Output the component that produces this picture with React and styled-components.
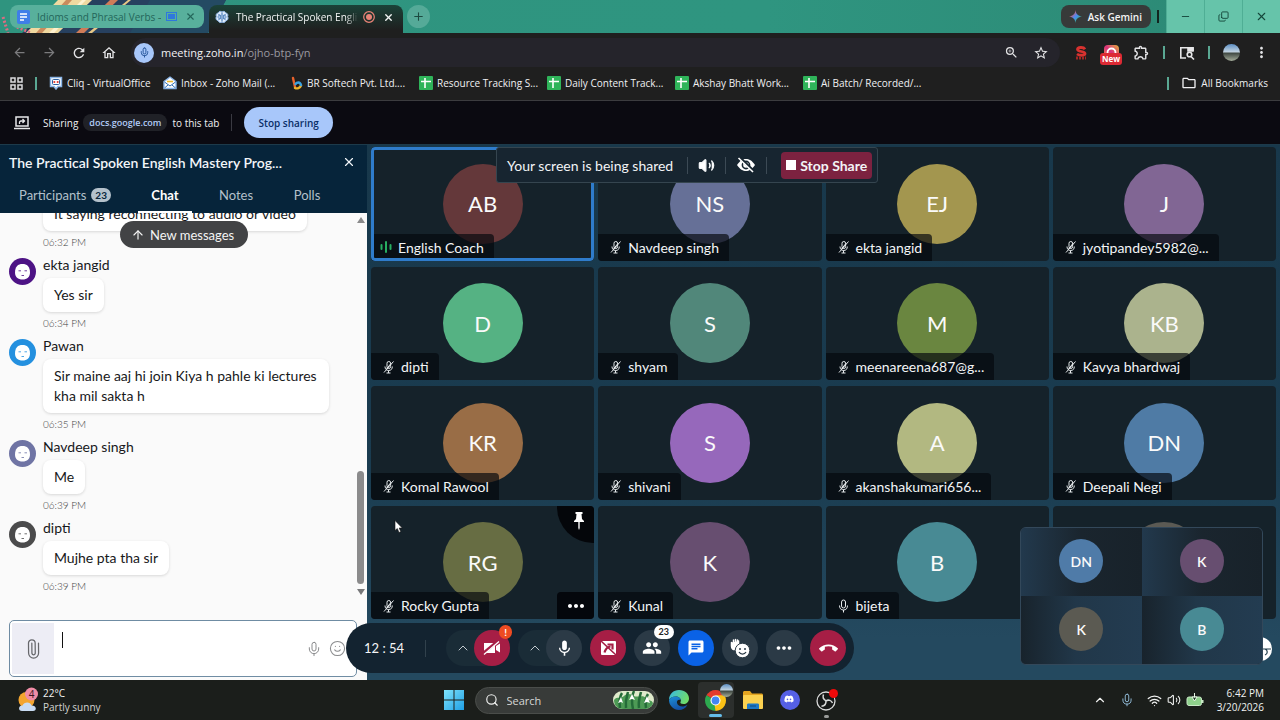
import React from "react";
import styled, { createGlobalStyle, css } from "styled-components";
import {
  MdArrowBack,
  MdArrowForward,
  MdCallEnd,
  MdChat,
  MdMic,
  MdMoreHoriz,
  MdMoreVert,
  MdOutlineExtension,
  MdOutlineFolder,
  MdOutlineHome,
  MdOutlineZoomIn,
  MdPeople,
  MdRefresh,
  MdStarBorder,
} from "react-icons/md";
import { FaDiscord } from "react-icons/fa";
import {
  ArrowUp,
  ChevronUp,
  Copy,
  Mic,
  Minus,
  Paperclip,
  Plus,
  Search,
  Smile,
  Volume2,
  Wifi,
  X,
} from "lucide-react";

const GlobalStyle = createGlobalStyle`
  *, *::before, *::after {
    box-sizing: border-box;
  }
  body {
    margin: 0;
    background: #1f1f1f;
  }
  button, input, textarea {
    font: inherit;
    color: inherit;
    border: none;
    background: none;
    padding: 0;
    margin: 0;
    outline: none;
  }
  svg {
    display: block;
    flex-shrink: 0;
  }
`;

const systemFont = `"Open Sans", "Noto Sans", sans-serif`;
const meetingFont = `Lato, "Open Sans", sans-serif`;

const Screen = styled.div`
  display: flex;
  flex-direction: column;
  height: 100vh;
  min-height: 600px;
  overflow: hidden;
  font-family: ${systemFont};
  font-size: 10px;
  color: #f0f0f2;
`;

/* ---------- browser chrome ---------- */

const TabStrip = styled.div`
  position: relative;
  display: flex;
  align-items: center;
  height: 33px;
  padding-left: 10px;
  background: linear-gradient(90deg, #2f947f 0%, #2f9580 60%, #2c8874 100%);
`;

const Wallpaper = styled.svg`
  position: absolute;
  left: 0;
  top: 0;
`;

const Tab = styled.div`
  position: relative;
  display: flex;
  align-items: center;
  gap: 5px;
  width: 194px;
  ${({ $active }) =>
    $active
      ? css`
          align-self: flex-end;
          height: 28px;
          margin-left: 5px;
          padding: 0 9px 4px 6px;
          color: #f2f5f4;
          border-radius: 8px 8px 0 0;
          background: linear-gradient(180deg, #1b4238 0%, #1f1f1f 90%);
        `
      : css`
          height: 23px;
          padding: 0 8px 0 7px;
          color: #24665a;
          border-radius: 8px;
          background: #58b09c;
        `}
`;

const TabTitle = styled.span`
  flex: 1;
  min-width: 0;
  padding-left: 2px;
  overflow: hidden;
  white-space: nowrap;
  mask-image: ${({ $fade }) => ($fade ? "linear-gradient(90deg, #000 90%, transparent)" : "none")};
`;

const PlainButton = styled.button`
  display: flex;
  align-items: center;
  justify-content: center;
  color: inherit;
`;

const TabClose = styled(PlainButton)`
  margin-left: 3px;
`;

const NewTab = styled(PlainButton)`
  width: 23px;
  height: 23px;
  margin-left: 4px;
  border-radius: 50%;
  background: #55aa98;
  color: #1c4a40;
`;

const GeminiButton = styled.button`
  display: flex;
  align-items: center;
  gap: 6px;
  height: 23px;
  padding: 0 9px 0 8px;
  margin-left: auto;
  border-radius: 8px;
  background: #373a39;
  color: #f4f4f4;
  font-weight: 600;
`;

const StripMark = styled.span`
  width: 2px;
  height: 13px;
  margin: 0 7px 0 6px;
  background: #12251f;
`;

const WindowButton = styled(PlainButton)`
  width: 38px;
  height: 33px;
  border-left: 1px solid #4fae95;
  background: #66c4aa;
  color: #15463a;
`;

const Toolbar = styled.div`
  display: flex;
  align-items: center;
  height: 39px;
  padding: 0 4px;
  background: #1f1f1f;
`;

const ToolButton = styled(PlainButton)`
  position: relative;
  width: 30px;
  height: 28px;
  color: ${({ $dim }) => ($dim ? "#7b7b7d" : "#e3e3e5")};
`;

const Omnibox = styled.div`
  display: flex;
  align-items: center;
  flex: 1;
  height: 29px;
  margin: 0 6px 0 7px;
  padding: 0 4px 0 3px;
  border-radius: 15px;
  background: #25242b;
`;

const MicChip = styled.span`
  display: flex;
  align-items: center;
  justify-content: center;
  width: 20px;
  height: 20px;
  margin-right: 7px;
  border-radius: 50%;
  background: #a8c7fa;
  color: #1b4b93;
`;

const Address = styled.span`
  flex: 1;
  font-size: 11px;
  color: #f1f1f3;

  span {
    color: #9a9aa0;
  }
`;

const Divider = styled.span`
  width: ${({ $thin }) => ($thin ? "1px" : "2px")};
  height: ${({ $tall }) => ($tall ? "17px" : "13px")};
  margin: 0 ${({ $gap = 7 }) => $gap}px;
  background: ${({ $color }) => $color || "#5aa893"};
`;

const NewBadge = styled.span`
  position: absolute;
  left: 4px;
  top: 14px;
  padding: 0 2px;
  border-radius: 3px;
  background: #dc2a34;
  color: #fff;
  font-size: 8px;
  line-height: 12px;
  font-weight: 700;
`;

const ProfilePhoto = styled.span`
  width: ${({ $size }) => $size}px;
  height: ${({ $size }) => $size}px;
  border-radius: 50%;
  background: linear-gradient(180deg, #5d8fc4 0%, #c6d6e2 48%, #3d4640 52%, #a5ad9b 100%);
`;

const BookmarkBar = styled.nav`
  display: flex;
  align-items: center;
  height: 29px;
  padding: 0 12px 6px 10px;
  border-bottom: 1px solid #3c3c3f;
  background: #1f1f1f;
`;

const BookmarkList = styled.div`
  display: flex;
  flex: 1;
`;

const Bookmark = styled.a`
  display: flex;
  align-items: center;
  gap: 4px;
  width: ${({ $width }) => ($width ? `${$width}px` : "auto")};
  color: #f0f0f2;
  text-decoration: none;
  white-space: nowrap;
`;

const ShareInfoBar = styled.div`
  display: flex;
  align-items: center;
  height: 44px;
  padding-left: 14px;
  border-bottom: 1px solid #1d3a4a;
  background: #0b0a11;
`;

const SharingLabel = styled.span`
  margin-left: 13px;
`;

const DomainPill = styled.span`
  margin: 0 5px;
  padding: 0 6px;
  border-radius: 8px;
  background: #202127;
  color: #b3cdf8;
  font-size: 9px;
  font-weight: 600;
  line-height: 17px;
`;

const StopSharing = styled.button`
  height: 31px;
  padding: 0 14px;
  border-radius: 16px;
  background: #a8c7fa;
  color: #0b2f68;
  font-weight: 600;
`;

/* ---------- meeting side panel ---------- */

const Meeting = styled.main`
  display: flex;
  flex: 1;
  min-height: 0;
  font-family: ${meetingFont};
  font-size: 14px;
`;

const Panel = styled.aside`
  display: flex;
  flex-direction: column;
  flex: 0 0 367px;
  min-height: 0;
  background: #fafafa;
`;

const PanelHeader = styled.header`
  height: 68px;
  background: #06243a;
  color: #f2f6f9;
`;

const PanelTitle = styled.h1`
  display: flex;
  align-items: center;
  justify-content: space-between;
  height: 34px;
  margin: 0;
  padding: 0 11px 0 9px;
  font-size: 14px;
  font-weight: 600;
`;

const PanelTabs = styled.div`
  display: flex;
  height: 34px;
  padding-left: 7px;
`;

const PanelTab = styled.button`
  display: flex;
  align-items: center;
  justify-content: center;
  gap: 5px;
  width: ${({ $width }) => $width}px;
  border-bottom: 2px solid transparent;
  color: #b3c0ca;
  font-size: 13px;

  ${({ $active }) =>
    $active &&
    css`
      border-image: linear-gradient(90deg, transparent 16px, #fff 16px, #fff 68px, transparent 68px) 1;
      color: #fff;
      font-weight: 700;
    `}
`;

const CountPill = styled.span`
  padding: 0 4px;
  border-radius: 7px;
  background: #b4c1cb;
  color: #0a263b;
  font-size: 10px;
  font-weight: 700;
  line-height: 14px;
`;

const ChatArea = styled.div`
  position: relative;
  display: flex;
  flex: 1;
  min-height: 0;
`;

const MessageList = styled.div`
  display: flex;
  flex-direction: column;
  justify-content: flex-end;
  flex: 1;
  min-height: 0;
  gap: 6px;
  padding: 0 0 27px 9px;
  overflow: hidden;
`;

const Message = styled.article`
  display: flex;
  align-items: flex-start;
  flex-shrink: 0;
  gap: 6px;
  padding-left: ${({ $continued }) => ($continued ? 33 : 0)}px;
  color: #17181a;
`;

const FaceIcon = styled.svg`
  margin-top: 3px;
`;

const MessageBody = styled.div`
  display: flex;
  flex-direction: column;
  align-items: flex-start;
  padding-left: 1px;
`;

const Sender = styled.span`
  margin-bottom: 3px;
  line-height: 20px;
`;

const Bubble = styled.p`
  max-width: 286px;
  margin: 0;
  padding: 7px 11px;
  border-radius: 8px;
  background: #fff;
  box-shadow: 0 1px 3px rgba(0, 0, 0, 0.14);
  line-height: 20px;
`;

const Time = styled.time`
  margin-top: 4px;
  font-size: 10px;
  font-weight: 300;
  line-height: 14px;
  color: #3d3e40;
`;

const NewMessages = styled.button`
  position: absolute;
  left: 120px;
  top: 8px;
  display: flex;
  align-items: center;
  gap: 5px;
  height: 27px;
  padding: 0 14px 0 11px;
  border-radius: 14px;
  background: #424345;
  color: #f4f4f4;
  font-size: 13px;
`;

const ScrollBar = styled.div`
  display: flex;
  flex-direction: column;
  align-items: center;
  width: 13px;
  padding: 4px 0 25px;
`;

const ScrollThumb = styled.span`
  width: 7px;
  height: 113px;
  margin: auto 0 5px;
  border-radius: 4px;
  background: #8b8b8c;
`;

const Composer = styled.form`
  display: flex;
  align-items: center;
  height: 57px;
  margin: 0 10px 3px 9px;
  padding: 2px 10px 2px 2px;
  border: 1px solid #6f8ca3;
  border-radius: 5px;
  background: #fff;
  color: #8a8b8d;
`;

const AttachButton = styled(PlainButton)`
  width: 42px;
  height: 51px;
  background: #ededf5;
  color: #66676b;
`;

const Caret = styled.span`
  align-self: flex-start;
  width: 1px;
  height: 16px;
  margin: 9px 0 0 8px;
  background: #111;
`;

const MessageInput = styled.textarea`
  flex: 1;
  min-width: 0;
  height: 36px;
  resize: none;
  color: #111;
`;

const ComposerTools = styled.span`
  display: flex;
  align-items: center;
  gap: 7px;
`;

/* ---------- participants stage ---------- */

const Stage = styled.section`
  position: relative;
  flex: 1;
  min-width: 0;
  display: flex;
  flex-direction: column;
  padding: 2px 4px 61px;
  background: linear-gradient(180deg, #18384b 0%, #1a3c50 60%, #24495f 92%);
`;

const TileGrid = styled.div`
  flex: 1;
  min-height: 0;
  display: grid;
  grid-template-columns: repeat(4, 1fr);
  grid-auto-rows: 1fr;
  gap: 6px 4px;
`;

const Tile = styled.div`
  position: relative;
  display: flex;
  align-items: center;
  justify-content: center;
  min-height: 0;
  border-radius: 4px;
  overflow: hidden;
  background: #15222a;

  &::after {
    content: "";
    position: absolute;
    inset: 0;
    border-radius: 4px;
    border: ${({ $speaking }) => ($speaking ? "3px solid #2f7ccb" : "none")};
  }
`;

const Avatar = styled.span`
  display: flex;
  align-items: center;
  justify-content: center;
  flex-shrink: 0;
  width: ${({ $small }) => ($small ? 44 : 80)}px;
  height: ${({ $small }) => ($small ? 44 : 80)}px;
  border-radius: 50%;
  background: ${({ $color }) => $color};
  color: #fafafa;
  font-size: ${({ $small }) => ($small ? 14 : 22)}px;
`;

const NameLabel = styled.span`
  position: absolute;
  left: 0;
  bottom: 0;
  display: flex;
  align-items: center;
  gap: 6px;
  height: 27px;
  padding: 0 10px 0 ${({ $speaking }) => ($speaking ? 9 : 11)}px;
  border-radius: 0 4px 0 0;
  background: rgba(4, 7, 14, 0.68);
  color: #f3f5f6;
  white-space: nowrap;
`;

const PinButton = styled(PlainButton)`
  position: absolute;
  right: 0;
  top: 0;
  width: 37px;
  height: 37px;
  padding: 0 0 6px 6px;
  border-radius: 0 0 0 36px;
  background: #04060a;
  color: #fff;
`;

const TileMenu = styled(PlainButton)`
  position: absolute;
  right: 0;
  bottom: 0;
  width: 37px;
  height: 27px;
  border-radius: 4px 0 0 0;
  background: #04070c;
  color: #fff;
`;

const Pointer = styled.svg`
  position: absolute;
  left: 23px;
  top: 14px;
`;

const ShareBanner = styled.div`
  position: absolute;
  left: 129px;
  top: 2px;
  display: flex;
  align-items: center;
  height: 36px;
  padding: 0 5px 0 10px;
  border: 1px solid #35454f;
  border-radius: 3px;
  background: #172530;
  color: #f2f4f6;
`;

const BannerText = styled.span`
  margin-right: 4px;
`;

const StopShare = styled.button`
  display: flex;
  align-items: center;
  gap: 4px;
  height: 27px;
  padding: 0 5px;
  margin-left: 4px;
  border-radius: 4px;
  background: #7c2240;
  font-weight: 700;
`;

const CallControls = styled.div`
  position: absolute;
  left: -21px;
  bottom: 7px;
  display: flex;
  align-items: center;
  gap: 8px;
  height: 50px;
  padding: 0 8px 0 18px;
  border-radius: 25px;
  background: #132330;
  color: #f5f6f7;
`;

const Elapsed = styled.span`
  width: 53px;
  font-size: 13px;
  white-space: pre;
`;

const ControlDivider = styled.span`
  width: 1px;
  height: 17px;
  margin-right: 12px;
  background: #31414c;
`;

const SplitControl = styled.div`
  display: flex;
  align-items: center;
  justify-content: space-between;
  width: 64px;
  padding-left: 9px;
  border-radius: 18px;
  background: #1a2c37;
  color: #c3cbd0;
`;

const RoundButton = styled(PlainButton)`
  position: relative;
  width: 36px;
  height: 36px;
  border-radius: 50%;
  background: ${({ $color }) => $color || "#2b3a46"};
  color: #fff;
`;

const RoundBadge = styled.span`
  position: absolute;
  right: ${({ $alert }) => ($alert ? -2 : -4)}px;
  top: -5px;
  padding: 0 5px;
  border-radius: 7px;
  background: ${({ $alert }) => ($alert ? "#ee4b22" : "#fff")};
  color: ${({ $alert }) => ($alert ? "#fff" : "#222")};
  font-size: ${({ $alert }) => ($alert ? 10 : 9)}px;
  font-weight: 700;
  line-height: 14px;
`;

const HelpButton = styled(PlainButton)`
  position: absolute;
  right: 8px;
  bottom: 19px;
  width: 24px;
  height: 24px;
  border-radius: 50%;
  background: #fff;
`;

const PictureInPicture = styled.div`
  position: absolute;
  right: 17px;
  bottom: 15px;
  display: grid;
  grid-template-columns: 1fr 1fr;
  grid-template-rows: 1fr 1fr;
  width: 243px;
  height: 138px;
  border: 1px solid #33485a;
  border-radius: 6px;
  overflow: hidden;
  background: #1b2a37;
  font-weight: 600;
`;

const PipTile = styled.div`
  display: flex;
  align-items: center;
  justify-content: center;
  padding-bottom: 2px;
  background: ${({ $reverse }) =>
    $reverse
      ? "linear-gradient(90deg, #18232c 0%, #213749 45%, #233c51 100%)"
      : "linear-gradient(90deg, #22394d 0%, #1a252e 50%, #18222a 100%)"};
`;

/* ---------- taskbar ---------- */

const Taskbar = styled.footer`
  display: grid;
  grid-template-columns: 1fr auto 1fr;
  align-items: center;
  height: 40px;
  background: #1b1e1b;
  color: #f1f2f1;
`;

const Weather = styled.div`
  display: flex;
  align-items: center;
  gap: 5px;
  padding-left: 17px;
  line-height: 14px;

  small {
    display: block;
    font-size: 10px;
    color: #d2d4d2;
  }
`;

const Dock = styled.div`
  display: flex;
  align-items: center;
  gap: 1px;
`;

const DockItem = styled(PlainButton)`
  position: relative;
  width: 36px;
  height: 36px;
  border-radius: 4px;
  background: ${({ $active }) => ($active ? "#2c2f2d" : "transparent")};

  &::after {
    content: "";
    position: absolute;
    bottom: ${({ $active }) => ($active ? 1 : 0)}px;
    width: ${({ $active, $running }) => ($active ? 13 : $running ? 5 : 0)}px;
    height: 3px;
    border-radius: 2px;
    background: ${({ $active }) => ($active ? "#66bdea" : "#9a9c9a")};
  }
`;

const CornerPhoto = styled.span`
  position: absolute;
  right: 1px;
  top: 2px;
  display: flex;
`;

const SearchBox = styled.label`
  display: flex;
  align-items: center;
  gap: 8px;
  width: 183px;
  height: 27px;
  margin: 0 2px;
  padding: 0 3px 0 9px;
  border: 1px solid #4a4d4a;
  border-radius: 14px;
  background: #383b39;

  input {
    flex: 1;
    min-width: 0;
    font-size: 11px;
  }

  input::placeholder {
    color: #d5d7d5;
    opacity: 1;
  }
`;

const Tray = styled.div`
  display: flex;
  align-items: center;
  justify-content: flex-end;
  gap: 13px;
  padding-right: 16px;
`;

const TrayGroup = styled.span`
  display: flex;
  align-items: center;
  gap: 5px;
`;

const Clock = styled.div`
  text-align: right;
  line-height: 14px;
`;

/* ---------- drawings ---------- */

const WallpaperArt = () => (
  <Wallpaper width="240" height="33" viewBox="0 0 240 33" aria-hidden="true">
    <path d="M60 0H226L208 33H22Z" fill="#27405f" />
    <path d="M58 0H92L58 33H26Z" fill="#f0d9a0" />
    <path d="M66 0H72L42 33H36Z" fill="#c98b5d" />
    <path d="M82 0H86L54 33H49Z" fill="#fff2cf" />
    <path d="M110 0H118L84 33H76Z" fill="#d07c58" />
    <path d="M128 0H131L92 33H88Z" fill="#e7c786" />
    <path d="M150 0H226L208 33H130Z" fill="#244a63" />
    <path d="M3 17L8 33M17 27L31 33" stroke="#dc6c82" strokeWidth="3" strokeDasharray="2 2" />
  </Wallpaper>
);

const DocsIcon = () => (
  <svg width="13" height="14" viewBox="0 0 13 14">
    <rect width="13" height="14" rx="2" fill="#3f7ee8" />
    <path d="M3 4H10M3 7H10M3 10H7" stroke="#fff" strokeWidth="1.5" />
  </svg>
);

const MeetingTabIcon = () => (
  <svg width="14" height="14" viewBox="0 0 14 14" fill="none">
    <path
      d="M7 2C5.500.8 3.800 1.300 3.400 2.900 1.500 3 .6 4.800 1.400 6.400.3 8.300 1.200 10.400 3.200 10.800 3.800 12.700 5.800 13 7 12 8.200 13 10.200 12.700 10.800 10.800 12.800 10.400 13.700 8.300 12.600 6.400 13.400 4.800 12.500 3 10.600 2.900 10.200 1.300 8.500.8 7 2Z"
      fill="#dfecfb"
      stroke="#8db3e2"
    />
    <path d="M7 2.500V11.500" stroke="#2c69ad" />
    <path d="M3 5H5.200V9H3.200M11 5H8.800V9H10.800" stroke="#2c69ad" />
    <path d="M2.500 7H4M10 7H11.500" stroke="#2c69ad" />
  </svg>
);

const SharedTabIcon = () => (
  <svg width="11" height="9" viewBox="0 0 11 9">
    <rect x=".5" y=".5" width="10" height="8" fill="none" stroke="#2f78dd" />
    <rect x="2" y="2" width="7" height="5" fill="#2f78dd" />
  </svg>
);

const RecordingIcon = () => (
  <svg width="12" height="12" viewBox="0 0 12 12">
    <circle cx="6" cy="6" r="5.300" fill="none" stroke="#e98377" strokeWidth="1.200" />
    <circle cx="6" cy="6" r="3" fill="#e98377" />
  </svg>
);

const GeminiIcon = () => (
  <svg width="13" height="13" viewBox="0 0 13 13">
    <defs>
      <linearGradient id="gem" x1="0" y1="0" x2="1" y2="1">
        <stop offset="0.2" stopColor="#ef5350" />
        <stop offset="0.500" stopColor="#4a8cf6" />
        <stop offset="0.800" stopColor="#36b37a" />
      </linearGradient>
    </defs>
    <path d="M6.500 0C7 4 9 6 13 6.500 9 7 7 9 6.500 13 6 9 4 7 0 6.500 4 6 6 4 6.500 0Z" fill="url(#gem)" />
  </svg>
);

const TabSearchIcon = () => (
  <svg width="16" height="14" viewBox="0 0 16 14" fill="none" stroke="#e6e6e8" strokeWidth="1.600">
    <path d="M7 12H1.800V1.800H14V5" />
    <path d="M9 2H14V5H9Z" fill="#e6e6e8" />
    <circle cx="10.500" cy="8.500" r="2.300" />
    <path d="M12 10.500L15 13.500" />
  </svg>
);

const InstaIcon = () => (
  <svg width="15" height="15" viewBox="0 0 15 15">
    <defs>
      <linearGradient id="insta" x1="0" y1="1" x2="1" y2="0">
        <stop offset="0" stopColor="#f2a33a" />
        <stop offset="0.500" stopColor="#d92f7d" />
        <stop offset="1" stopColor="#e5b53a" />
      </linearGradient>
    </defs>
    <rect width="15" height="15" rx="4" fill="url(#insta)" />
    <circle cx="7.500" cy="7.500" r="4" fill="none" stroke="#fff" strokeWidth="1.800" />
  </svg>
);

const ScriptIcon = () => (
  <svg width="14" height="14" viewBox="0 0 14 14" fill="none">
    <path d="M11 3.200C9.500.800 3.500 1 3.500 3.500S11 5 11 7.500 5 9.500 3 8" stroke="#d8322f" strokeWidth="2.800" />
    <path d="M2 12H12" stroke="#a32725" strokeWidth="3" strokeDasharray="2 1" />
  </svg>
);

const AppsIcon = () => (
  <svg width="13" height="13" viewBox="0 0 13 13" fill="none" stroke="#dcdcde" strokeWidth="1.500">
    <rect x="1" y="1" width="4" height="4" />
    <rect x="8" y="1" width="4" height="4" />
    <rect x="1" y="8" width="4" height="4" />
    <rect x="8" y="8" width="4" height="4" />
  </svg>
);

const CliqIcon = () => (
  <svg width="14" height="14" viewBox="0 0 14 14">
    <path d="M1.500 1.500H12.500V10.500H9L7 13 5 10.500H1.500Z" fill="#fff" stroke="#8bb6e8" strokeWidth="1.500" />
    <rect x="3.500" y="3.500" width="7" height="5" rx="1" fill="none" stroke="#2b5f9e" />
    <path d="M4.500 6H6.200M7.800 6H9.500" stroke="#e2423d" strokeWidth="2" />
  </svg>
);

const MailIcon = () => (
  <svg width="14" height="14" viewBox="0 0 14 14" fill="none">
    <path d="M1 5.500L7 1 13 5.500V12.500H1Z" fill="#fff" stroke="#8bb6e8" strokeWidth="1.400" />
    <path d="M1.500 6L7 10 12.500 6M1.500 12L5 9M12.500 12L9 9" stroke="#2f6fb5" />
    <path d="M4 5.500H10" stroke="#e9b82f" strokeWidth="1.600" />
  </svg>
);

const SoftechIcon = () => (
  <svg width="12" height="14" viewBox="0 0 12 14" fill="none" strokeWidth="2.400" strokeLinecap="round">
    <path d="M2 2L4 11" stroke="#e8622c" />
    <path d="M4 12C6 13 9 12 10 9.500" stroke="#f0b429" />
    <path d="M4.500 8C6 6 9 5.500 10 9" stroke="#3ba2e0" />
  </svg>
);

const SheetIcon = () => (
  <svg width="14" height="14" viewBox="0 0 14 14">
    <rect width="14" height="14" rx="1" fill="#2fb45a" />
    <path d="M2 5.500H12M6 2V12" stroke="#fff" strokeWidth="1.600" />
  </svg>
);

const CastIcon = () => (
  <svg width="16" height="14" viewBox="0 0 16 14" fill="none" stroke="#e8e8ea" strokeWidth="1.500">
    <rect x="2" y="1" width="12" height="9" />
    <path d="M0 12.500H16" />
    <path d="M5.500 8V6.500C5.500 5.500 6 5 7 5H10M8.500 3L10.500 5 8.500 7" strokeWidth="1.300" />
  </svg>
);

const Face = ({ color }) => (
  <FaceIcon width="27" height="27" viewBox="0 0 27 27" aria-hidden="true">
    <circle cx="13.500" cy="13.500" r="13.500" fill={color} />
    <path d="M13.500 6C18 6 21 8.500 21 14.500 21 19 18 21.500 13.500 21.500S6 19 6 14.500C6 8.500 9 6 13.500 6Z" fill="#fff" />
    <path d="M9.500 12.800H12M15.500 12.800H18M12.500 17.500H15" stroke={color} strokeWidth="0.800" />
  </FaceIcon>
);

const MicOffIcon = () => (
  <svg width="13" height="14" viewBox="0 0 13 14" fill="none" stroke="#e6eaec" strokeWidth="1">
    <rect x="5" y="1.500" width="3.600" height="7" rx="1.800" />
    <path d="M3 6.500C3 9 4.300 10.500 6.700 10.500S10.300 9 10.300 6.500M6.500 10.500V13M4.500 13H8.500" />
    <path d="M11.500 1.500L2 12.500M9.300 3L4.500 9" />
  </svg>
);

const MicOnIcon = () => (
  <svg width="13" height="14" viewBox="0 0 13 14" fill="none" stroke="#e6eaec" strokeWidth="1">
    <rect x="4.500" y="1" width="4" height="8" rx="2" />
    <path d="M2.500 6.500C2.500 9.500 4 11 6.500 11S10.500 9.500 10.500 6.500M6.500 11V13.500" />
  </svg>
);

const SpeakingIcon = () => (
  <svg width="12" height="12" viewBox="0 0 12 12" stroke="#27ae60" strokeWidth="2" strokeLinecap="round">
    <path d="M1.500 4V8M6 1V11M10.500 4V8" />
  </svg>
);

const HiddenEyeIcon = () => (
  <svg width="20" height="16" viewBox="0 0 20 16">
    <path d="M1 8C4 3.500 7 2 10 2S16 3.500 19 8C16 12.500 13 14 10 14S4 12.500 1 8Z" fill="#fff" />
    <circle cx="10" cy="8" r="3.600" fill="none" stroke="#172530" strokeWidth="1.600" />
    <path d="M4 1L18 14.500" stroke="#172530" strokeWidth="3" />
    <path d="M2.500 1L17 15" stroke="#fff" strokeWidth="1.600" />
  </svg>
);

const PinIcon = () => (
  <svg width="10" height="18" viewBox="0 0 10 18" fill="#fff">
    <path d="M1.500 0H8.500V2H7.500L8 7 10 9V10H0V9L2 7 2.500 2H1.500Z" />
    <path d="M4.300 10H5.700V16L5 18 4.300 16Z" />
  </svg>
);

const CameraOffIcon = () => (
  <svg width="18" height="16" viewBox="0 0 18 16">
    <path d="M1 3H12V13H1ZM13 6L17 3.500V12.500L13 10Z" fill="#fff" />
    <path d="M0 13.500L15 1" stroke="#a61e45" strokeWidth="3" />
    <path d="M1 14.500L16 1.500" stroke="#fff" strokeWidth="1.300" />
  </svg>
);

const StopPresentIcon = () => (
  <svg width="17" height="16" viewBox="0 0 17 16">
    <rect x="1" y="1" width="15" height="14" rx="1" fill="#fff" />
    <path d="M4.500 12.500C5.500 9 7 7 10.500 6.500M7.500 4.500H12.500V9.500" fill="none" stroke="#a61e45" strokeWidth="2.200" />
    <path d="M1 1L16 15" stroke="#a61e45" strokeWidth="1.600" />
  </svg>
);

const ReactionIcon = () => (
  <svg width="20" height="20" viewBox="0 0 20 20">
    <path d="M1.500 4.500V8C1.500 10.500 3 12 5.500 11.500L8.500 8V3M3.500 6V2M5.500 6V1.500M7.500 6V2" fill="#fff" stroke="#fff" strokeWidth="1.500" strokeLinecap="round" />
    <circle cx="12.500" cy="12.500" r="7.300" fill="#fff" stroke="#2b3a46" strokeWidth="1" />
    <circle cx="10" cy="11" r="1" fill="#2b3a46" />
    <circle cx="15" cy="11" r="1" fill="#2b3a46" />
    <path d="M9 14C10.500 16.800 14.500 16.800 16 14" fill="none" stroke="#2b3a46" strokeWidth="1.300" />
  </svg>
);

const HelpIcon = () => (
  <svg width="24" height="24" viewBox="0 0 24 24" fill="none" stroke="#24404f" strokeWidth="1.200">
    <path d="M12 12H23M17 12C20 13 20 17 17 18" />
  </svg>
);

const WeatherIcon = () => (
  <svg width="21" height="26" viewBox="0 0 21 26">
    <circle cx="9.500" cy="13" r="8" fill="#f3a52f" />
    <path d="M5 24C1 24 1 18.500 5.500 18.500 7 14.500 13.500 14.500 14.500 18.500 20 18.500 20 24 16 24Z" fill="#c9dcf3" />
    <circle cx="14.500" cy="7" r="6.500" fill="#f08ca6" />
    <text x="14.500" y="10.500" textAnchor="middle" fontFamily="Open Sans" fontSize="10" fill="#3a1620">4</text>
  </svg>
);

const StartIcon = () => (
  <svg width="20" height="20" viewBox="0 0 20 20">
    <defs>
      <linearGradient id="win" x1="0" y1="0" x2="1" y2="1">
        <stop offset="0" stopColor="#7fe3fb" />
        <stop offset="1" stopColor="#1f9fe6" />
      </linearGradient>
    </defs>
    <path d="M0 0H9.500V9.500H0ZM10.500 0H20V9.500H10.500ZM0 10.500H9.500V20H0ZM10.500 10.500H20V20H10.500Z" fill="url(#win)" />
  </svg>
);

const SnowdropArt = () => (
  <svg width="41" height="20" viewBox="0 0 41 20">
    <rect y="1" width="41" height="18" rx="9" fill="#dfeacb" />
    <path d="M1 10C4 6 8 9 11 6S18 4 21 6 30 4 33 8 38 9 40 13C39 17 35 19 31 19H10C5 19 1 16 1 10Z" fill="#4d9a55" />
    <path d="M7 18C6 11 7 6 9 3M13 18C12 10 14 6 15 2M20 19C18 10 19 5 21 1M26 18C25 11 27 6 28 2M33 18C32 11 33 7 35 4" stroke="#246b38" strokeWidth="2.500" fill="none" />
    <path d="M8 7L5 13 8 12 10 13ZM19 4L16 10 19 9 22 10ZM34 6L31 13 34 12 37 13Z" fill="#fff" />
  </svg>
);

const EdgeIcon = () => (
  <svg width="22" height="22" viewBox="0 0 22 22">
    <defs>
      <linearGradient id="edgeTop" x1="0" y1="0" x2="1" y2="0.400">
        <stop offset="0" stopColor="#35b8e8" />
        <stop offset="1" stopColor="#6fdc6c" />
      </linearGradient>
      <linearGradient id="edgeBase" x1="0" y1="0" x2="0.500" y2="1">
        <stop offset="0" stopColor="#1d8fd8" />
        <stop offset="1" stopColor="#144fa5" />
      </linearGradient>
    </defs>
    <path d="M1 11C1 5 5.500 1 11 1 17 1 21 5 21 9.500 21 13 18.500 15 15.500 15 13 15 12 14 12.500 13 14 10 11 7.500 8 7.500 4.500 7.500 2 9 1 11Z" fill="url(#edgeTop)" />
    <path d="M1 11C2 8.500 5 7.500 8 7.500 10.500 7.500 12.500 9 12.700 11 10 10 8.500 12 9 14 9.800 17.500 15 19 19.500 15.800 17.500 19.500 14.500 21 11 21 5.500 21 1 16.500 1 11Z" fill="url(#edgeBase)" />
  </svg>
);

const ChromeIcon = () => (
  <svg width="21" height="21" viewBox="0 0 20 20">
    <path d="M10 10L1.340 5A10 10 0 0 1 18.660 5Z" fill="#e33b2e" />
    <path d="M10 10L18.660 5A10 10 0 0 1 10 20Z" fill="#fbc116" />
    <path d="M10 10L10 20A10 10 0 0 1 1.340 5Z" fill="#2da94f" />
    <path d="M10 5H18.660L14.300 12.500L10 20L9 13Z" fill="#fbc116" />
    <circle cx="10" cy="10" r="4.800" fill="#fff" />
    <circle cx="10" cy="10" r="3.700" fill="#4285f4" />
  </svg>
);

const FolderIcon = () => (
  <svg width="20" height="18" viewBox="0 0 20 18">
    <path d="M0 1.500C0 .7.7 0 1.500 0H7L9 2.500H18.500C19.300 2.500 20 3 20 4V8H0Z" fill="#e3a420" />
    <rect y="4" width="20" height="14" rx="1" fill="#fbd150" />
    <path d="M4 18V14C4 13 4.500 12.500 5.500 12.500H14.500C15.500 12.500 16 13 16 14V18Z" fill="#1f78c5" />
    <path d="M7 15H13" stroke="#114b80" />
  </svg>
);

const DiscordIcon = () => (
  <svg width="20" height="20" viewBox="0 0 20 20">
    <circle cx="10" cy="10" r="10" fill="#5560e6" />
    <FaDiscord x="4" y="4" width="12" height="12" color="#fff" />
  </svg>
);

const ObsIcon = () => (
  <svg width="24" height="24" viewBox="0 0 24 24" fill="none">
    <circle cx="11" cy="13" r="9" fill="#161817" stroke="#d9dad9" strokeWidth="1.300" />
    <path d="M8.500 6.500C7.500 9 8.500 11.500 11 12.800M11 12.800C13.500 11.300 16.500 12.500 17.500 15M11 12.800C11.200 16 9.500 18 6.500 18.300" stroke="#d9dad9" strokeWidth="1.500" />
    <circle cx="18.500" cy="5.500" r="4.500" fill="#f00a0a" />
  </svg>
);

const BatteryIcon = () => (
  <svg width="18" height="14" viewBox="0 0 18 14">
    <rect x="1" y="4" width="14.500" height="8.500" rx="2" fill="#8fd18c" stroke="#c9e9c7" />
    <path d="M16 7H17.500V10H16Z" fill="#c9e9c7" />
    <path d="M8.500 0V4.500M6 4L8.500 8 11 4Z" stroke="#e9f6e8" fill="#17301a" />
  </svg>
);

/* ---------- data ---------- */

const bookmarks = [
  { title: "Cliq - VirtualOffice", icon: <CliqIcon />, width: 114 },
  { title: "Inbox - Zoho Mail (...", icon: <MailIcon />, width: 128 },
  { title: "BR Softech Pvt. Ltd....", icon: <SoftechIcon />, width: 128 },
  { title: "Resource Tracking S...", icon: <SheetIcon />, width: 128 },
  { title: "Daily Content Track...", icon: <SheetIcon />, width: 128 },
  { title: "Akshay Bhatt Work...", icon: <SheetIcon />, width: 128 },
  { title: "Ai Batch/ Recorded/...", icon: <SheetIcon />, width: 128 },
];

const panelTabs = [
  { name: "Participants", width: 116, count: 23 },
  { name: "Chat", width: 84, active: true },
  { name: "Notes", width: 58 },
  { name: "Polls", width: 84 },
];

const messages = [
  { continued: true, text: "It saying reconnecting to audio or video", time: "06:32 PM" },
  { sender: "ekta jangid", color: "#4d1385", text: "Yes sir", time: "06:34 PM" },
  { sender: "Pawan", color: "#2490df", text: "Sir maine aaj hi join Kiya h pahle ki lectures kha mil sakta h", time: "06:35 PM" },
  { sender: "Navdeep singh", color: "#6f74a4", text: "Me", time: "06:39 PM" },
  { sender: "dipti", color: "#4b4b4c", text: "Mujhe pta tha sir", time: "06:39 PM" },
];

const participants = [
  { initials: "AB", name: "English Coach", color: "#64383a", speaking: true },
  { initials: "NS", name: "Navdeep singh", color: "#667097" },
  { initials: "EJ", name: "ekta jangid", color: "#a3964f" },
  { initials: "J", name: "jyotipandey5982@...", color: "#816694" },
  { initials: "D", name: "dipti", color: "#55b283" },
  { initials: "S", name: "shyam", color: "#51877a" },
  { initials: "M", name: "meenareena687@g...", color: "#6a8640" },
  { initials: "KB", name: "Kavya bhardwaj", color: "#abb38d" },
  { initials: "KR", name: "Komal Rawool", color: "#996d46" },
  { initials: "S", name: "shivani", color: "#9668bb" },
  { initials: "A", name: "akanshakumari656...", color: "#b2b881" },
  { initials: "DN", name: "Deepali Negi", color: "#4f7ba5" },
  { initials: "RG", name: "Rocky Gupta", color: "#676d43", hovered: true },
  { initials: "K", name: "Kunal", color: "#674e70" },
  { initials: "B", name: "bijeta", color: "#488a94", micOn: true },
  { color: "#5b5a54" },
];

const pipTiles = [
  { initials: "DN", color: "#4f7ba8" },
  { initials: "K", color: "#674e70" },
  { initials: "K", color: "#5b5a52", reverse: true },
  { initials: "B", color: "#488a94", reverse: true },
];

/* ---------- sections ---------- */

const BrowserHeader = () => (
  <>
    <TabStrip>
      <WallpaperArt />
      <Tab>
        <DocsIcon />
        <TabTitle>Idioms and Phrasal Verbs –</TabTitle>
        <SharedTabIcon />
        <TabClose aria-label="Close tab">
          <X size={11} strokeWidth={2.5} />
        </TabClose>
      </Tab>
      <Tab $active>
        <MeetingTabIcon />
        <TabTitle $fade>The Practical Spoken English</TabTitle>
        <RecordingIcon />
        <TabClose aria-label="Close tab">
          <X size={11} strokeWidth={3} />
        </TabClose>
      </Tab>
      <NewTab aria-label="New tab">
        <Plus size={13} />
      </NewTab>
      <GeminiButton>
        <GeminiIcon />
        Ask Gemini
      </GeminiButton>
      <StripMark />
      <WindowButton aria-label="Minimize">
        <Minus size={11} strokeWidth={2} />
      </WindowButton>
      <WindowButton aria-label="Restore">
        <Copy size={11} strokeWidth={2} transform="rotate(-90)" />
      </WindowButton>
      <WindowButton aria-label="Close">
        <X size={13} strokeWidth={2} />
      </WindowButton>
    </TabStrip>
    <Toolbar>
      <ToolButton $dim aria-label="Back">
        <MdArrowBack size={15} />
      </ToolButton>
      <ToolButton $dim aria-label="Forward">
        <MdArrowForward size={15} />
      </ToolButton>
      <ToolButton aria-label="Reload">
        <MdRefresh size={16} />
      </ToolButton>
      <ToolButton aria-label="Home">
        <MdOutlineHome size={16} />
      </ToolButton>
      <Omnibox>
        <MicChip>
          <Mic size={11} />
        </MicChip>
        <Address>
          meeting.zoho.in<span>/ojho-btp-fyn</span>
        </Address>
        <ToolButton aria-label="Zoom">
          <MdOutlineZoomIn size={15} />
        </ToolButton>
        <ToolButton aria-label="Bookmark this tab">
          <MdStarBorder size={16} />
        </ToolButton>
      </Omnibox>
      <ToolButton aria-label="Script extension">
        <ScriptIcon />
      </ToolButton>
      <ToolButton aria-label="Photo extension">
        <InstaIcon />
        <NewBadge>New</NewBadge>
      </ToolButton>
      <ToolButton aria-label="Extensions">
        <MdOutlineExtension size={17} />
      </ToolButton>
      <Divider />
      <ToolButton aria-label="Search tabs">
        <TabSearchIcon />
      </ToolButton>
      <Divider $gap={6} />
      <ToolButton aria-label="Profile">
        <ProfilePhoto $size={17} />
      </ToolButton>
      <ToolButton aria-label="Menu">
        <MdMoreVert size={17} />
      </ToolButton>
    </Toolbar>
    <BookmarkBar>
      <AppsIcon />
      <Divider $gap={12} />
      <BookmarkList>
        {bookmarks.map((item) => (
          <Bookmark key={item.title} href="#" $width={item.width}>
            {item.icon}
            {item.title}
          </Bookmark>
        ))}
      </BookmarkList>
      <Divider $gap={12} />
      <Bookmark href="#">
        <MdOutlineFolder size={16} />
        All Bookmarks
      </Bookmark>
    </BookmarkBar>
    <ShareInfoBar>
      <CastIcon />
      <SharingLabel>Sharing</SharingLabel>
      <DomainPill>docs.google.com</DomainPill>
      to this tab
      <Divider $thin $tall $gap={12} $color="#3a3a42" />
      <StopSharing>Stop sharing</StopSharing>
    </ShareInfoBar>
  </>
);

const ChatPanel = () => (
  <Panel>
    <PanelHeader>
      <PanelTitle>
        The Practical Spoken English Mastery Prog...
        <PlainButton aria-label="Close panel">
          <X size={14} strokeWidth={2} />
        </PlainButton>
      </PanelTitle>
      <PanelTabs>
        {panelTabs.map((tab) => (
          <PanelTab key={tab.name} $width={tab.width} $active={tab.active}>
            {tab.name}
            {tab.count && <CountPill>{tab.count}</CountPill>}
          </PanelTab>
        ))}
      </PanelTabs>
    </PanelHeader>
    <ChatArea>
      <MessageList>
        {messages.map((message, index) => (
          <Message key={index} $continued={message.continued}>
            {!message.continued && <Face color={message.color} />}
            <MessageBody>
              {message.sender && <Sender>{message.sender}</Sender>}
              <Bubble>{message.text}</Bubble>
              <Time>{message.time}</Time>
            </MessageBody>
          </Message>
        ))}
      </MessageList>
      <ScrollBar>
        <svg width="8" height="6" viewBox="0 0 8 6">
          <path d="M4 0L8 6H0Z" fill="#8b8b8c" />
        </svg>
        <ScrollThumb />
        <svg width="8" height="6" viewBox="0 0 8 6">
          <path d="M4 6L8 0H0Z" fill="#77787a" />
        </svg>
      </ScrollBar>
      <NewMessages>
        <ArrowUp size={14} />
        New messages
      </NewMessages>
    </ChatArea>
    <Composer>
      <AttachButton type="button" aria-label="Attach file">
        <Paperclip size={20} strokeWidth={1.5} transform="rotate(-45)" />
      </AttachButton>
      <Caret />
      <MessageInput aria-label="Message" />
      <ComposerTools>
        <Mic size={16} strokeWidth={1.5} />
        <Smile size={17} strokeWidth={1.5} />
      </ComposerTools>
    </Composer>
  </Panel>
);

const ParticipantTile = ({ person }) => (
  <Tile $speaking={person.speaking}>
    <Avatar $color={person.color}>{person.initials}</Avatar>
    {person.name && (
      <NameLabel $speaking={person.speaking}>
        {person.speaking ? <SpeakingIcon /> : person.micOn ? <MicOnIcon /> : <MicOffIcon />}
        {person.name}
      </NameLabel>
    )}
    {person.hovered && (
      <>
        <PinButton aria-label="Pin">
          <PinIcon />
        </PinButton>
        <TileMenu aria-label="More options">
          <MdMoreHoriz size={24} />
        </TileMenu>
        <Pointer width="9" height="13" viewBox="0 0 9 13">
          <path d="M1 0.500V10.500L3.300 8.500L5 12.500L6.800 11.700L5.200 8H8.300Z" fill="#fff" stroke="#111" strokeWidth="0.600" />
        </Pointer>
      </>
    )}
  </Tile>
);

const MeetingStage = () => (
  <Stage>
    <TileGrid>
      {participants.map((person, index) => (
        <ParticipantTile key={index} person={person} />
      ))}
    </TileGrid>
    <ShareBanner>
      <BannerText>Your screen is being shared</BannerText>
      <Divider $thin $tall $gap={10} $color="#3c4a55" />
      <Volume2 size={17} fill="#fff" />
      <Divider $thin $tall $gap={10} $color="#3c4a55" />
      <HiddenEyeIcon />
      <Divider $thin $tall $gap={10} $color="#3c4a55" />
      <StopShare>
        <svg width="10" height="10" viewBox="0 0 10 10">
          <rect width="10" height="10" fill="#fff" />
        </svg>
        Stop Share
      </StopShare>
    </ShareBanner>
    <CallControls>
      <Elapsed>12 : 54</Elapsed>
      <ControlDivider />
      <SplitControl>
        <ChevronUp size={16} strokeWidth={1.5} />
        <RoundButton $color="#a61e45" aria-label="Turn camera on">
          <CameraOffIcon />
          <RoundBadge $alert>!</RoundBadge>
        </RoundButton>
      </SplitControl>
      <SplitControl>
        <ChevronUp size={16} strokeWidth={1.5} />
        <RoundButton aria-label="Mute">
          <MdMic size={19} />
        </RoundButton>
      </SplitControl>
      <RoundButton $color="#a61e45" aria-label="Stop presenting">
        <StopPresentIcon />
      </RoundButton>
      <RoundButton aria-label="Participants">
        <MdPeople size={20} />
        <RoundBadge>23</RoundBadge>
      </RoundButton>
      <RoundButton $color="#0a62e6" aria-label="Chat">
        <MdChat size={18} />
      </RoundButton>
      <RoundButton aria-label="Reactions">
        <ReactionIcon />
      </RoundButton>
      <RoundButton aria-label="More">
        <MdMoreHoriz size={22} />
      </RoundButton>
      <RoundButton $color="#a61e45" aria-label="Leave">
        <MdCallEnd size={19} />
      </RoundButton>
    </CallControls>
    <HelpButton aria-label="Help">
      <HelpIcon />
    </HelpButton>
    <PictureInPicture>
      {pipTiles.map((tile, index) => (
        <PipTile key={index} $reverse={tile.reverse}>
          <Avatar $small $color={tile.color}>
            {tile.initials}
          </Avatar>
        </PipTile>
      ))}
    </PictureInPicture>
  </Stage>
);

const WindowsTaskbar = () => (
  <Taskbar>
    <Weather>
      <WeatherIcon />
      <div>
        22°C
        <small>Partly sunny</small>
      </div>
    </Weather>
    <Dock>
      <DockItem aria-label="Start">
        <StartIcon />
      </DockItem>
      <SearchBox>
        <Search size={14} />
        <input type="text" placeholder="Search" aria-label="Search" />
        <SnowdropArt />
      </SearchBox>
      <DockItem aria-label="Edge">
        <EdgeIcon />
      </DockItem>
      <DockItem $active aria-label="Chrome">
        <ChromeIcon />
        <CornerPhoto>
          <ProfilePhoto $size={13} />
        </CornerPhoto>
      </DockItem>
      <DockItem aria-label="File Explorer">
        <FolderIcon />
      </DockItem>
      <DockItem aria-label="Discord">
        <DiscordIcon />
      </DockItem>
      <DockItem $running aria-label="OBS Studio">
        <ObsIcon />
      </DockItem>
    </Dock>
    <Tray>
      <ChevronUp size={14} />
      <Mic size={14} strokeWidth={1.5} color="#9cc9e8" />
      <TrayGroup>
        <Wifi size={15} />
        <Volume2 size={14} strokeWidth={1.8} />
        <BatteryIcon />
      </TrayGroup>
      <Clock>
        6:42 PM
        <br />
        3/20/2026
      </Clock>
    </Tray>
  </Taskbar>
);

const App = () => (
  <Screen>
    <GlobalStyle />
    <BrowserHeader />
    <Meeting>
      <ChatPanel />
      <MeetingStage />
    </Meeting>
    <WindowsTaskbar />
  </Screen>
);

export default App;
